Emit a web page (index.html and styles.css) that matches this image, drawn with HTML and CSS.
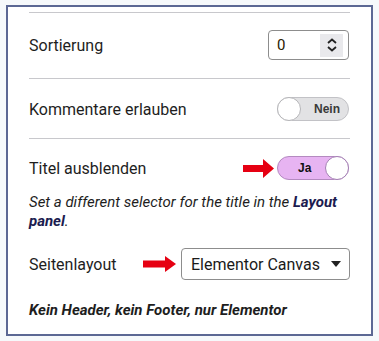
FILE: index.html
```html
<!DOCTYPE html>
<html lang="de">
<head>
  <meta charset="UTF-8" />
  <title>Seiteneinstellungen</title>
  <link rel="stylesheet" href="styles.css">
</head>
<body>
  <div class="frame">
    <div class="panel">

      <div class="row first">
        <span class="label">Sortierung</span>
        <div class="number">
          <span class="value">0</span>
          <span class="spin">
            <svg width="14" height="16" viewBox="0 0 14 16">
              <path d="M3 6 L7 2.5 L11 6" fill="none" stroke="#222" stroke-width="1.8" />
              <path d="M3 10 L7 13.5 L11 10" fill="none" stroke="#222" stroke-width="1.8" />
            </svg>
          </span>
        </div>
      </div>

      <div class="row">
        <span class="label">Kommentare erlauben</span>
        <div class="toggle off">
          <span class="knob"></span>
          <span class="state">Nein</span>
        </div>
      </div>

      <div class="section">
        <div class="row plain">
          <span class="label">Titel ausblenden</span>
          <div class="ctrl">
            <svg class="arrow" width="31" height="19" viewBox="0 0 31 19">
              <path d="M0 6 H20 V0 L31 9.5 L20 19 V13 H0 Z" fill="#e60012" />
            </svg>
            <div class="toggle on">
              <span class="state">Ja</span>
              <span class="knob"></span>
            </div>
          </div>
        </div>
        <p class="note">Set a different selector for the title in the <b>Layout</b><br><b>panel</b>.</p>

        <div class="row plain layout">
          <span class="label">Seitenlayout</span>
          <div class="ctrl">
            <svg class="arrow" width="33" height="16" viewBox="0 0 33 16">
              <path d="M0 4.5 H22 V0 L33 8 L22 16 V11.5 H0 Z" fill="#e60012" />
            </svg>
            <div class="select">
              <span>Elementor Canvas</span>
              <span class="caret"></span>
            </div>
          </div>
        </div>
        <p class="note strong">Kein Header, kein Footer, nur Elementor</p>
      </div>

    </div>
  </div>
</body>
</html>
```

FILE: styles.css
```css
body {
  margin: 0;
  background: #f6f9fb;
  font-family: Roboto, "Liberation Sans", sans-serif;
  color: #1e1e1e;
}

.frame {
  margin: 5px 0 0 6px;
  width: 363px;
  height: 327px;
  background: white;
  border: 2px solid #5c6894;
}

.panel {
  padding: 5px 21px 0 21px;
}

.row {
  display: flex;
  justify-content: space-between;
  align-items: center;
  border-top: 1px solid #c8c8cc;
  padding: 17px 0 18px;
}

.row + .row {
  padding: 18px 0 17px;
}

.label {
  font-size: 16px;
}

.number {
  width: 66px;
  height: 28px;
  border: 1px solid #8d8d8d;
  border-radius: 4px;
  display: flex;
  align-items: center;
  justify-content: space-between;
  padding: 0 5px 0 8px;
  box-sizing: content-box;
  margin-right: 1px;
}

.value {
  font-size: 15px;
  color: #2a2000;
}

.spin {
  width: 23px;
  height: 23px;
  background: #e9e9ec;
  display: flex;
  align-items: center;
  justify-content: center;
}

.toggle {
  width: 70px;
  height: 22px;
  border-radius: 12px;
  display: flex;
  align-items: center;
  justify-content: space-between;
  font-family: "Liberation Sans", Arial, sans-serif;
  font-size: 12px;
  font-weight: bold;
  margin-right: 1px;
}

.knob {
  width: 22px;
  height: 22px;
  border-radius: 50%;
  background: white;
}

.toggle.off {
  background: #e2e2e4;
  border: 1px solid #c2c2c6;
  color: #3a3a3a;
}

.toggle.off .knob {
  border: 1px solid #b5b5b8;
  margin-left: -1px;
}

.toggle.off .state {
  margin-right: 8px;
}

.toggle.on {
  background: #e7b4f2;
  border: 1px solid #b48ac0;
  color: #111;
}

.toggle.on .knob {
  border: 1px solid #a47fb4;
  margin-right: -1px;
}

.toggle.on .state {
  margin-left: 20px;
}

.section {
  border-top: 1px solid #c8c8cc;
  padding-top: 17px;
}

.plain {
  border-top: none;
  padding: 0;
}

.ctrl {
  display: flex;
  align-items: center;
}

.ctrl .arrow {
  margin-right: 3px;
}

.note {
  margin: 13px 0 0;
  font-size: 15px;
  font-style: italic;
  line-height: 19px;
  color: #1e1e1e;
}

.note b {
  color: #1c1c50;
}

.layout {
  margin-top: 17px;
}

.layout .arrow {
  margin-right: 5px;
}

.select {
  width: 150px;
  height: 30px;
  border: 1px solid #8d8d8d;
  border-radius: 4px;
  display: flex;
  align-items: center;
  justify-content: space-between;
  padding: 0 8px 0 9px;
  font-size: 16px;
  color: #1a1a1a;
  box-sizing: content-box;
}

.caret {
  width: 0;
  height: 0;
  border-left: 5px solid transparent;
  border-right: 5px solid transparent;
  border-top: 6px solid #222;
}

.note.strong {
  font-weight: bold;
  margin-top: 21px;
}
```
